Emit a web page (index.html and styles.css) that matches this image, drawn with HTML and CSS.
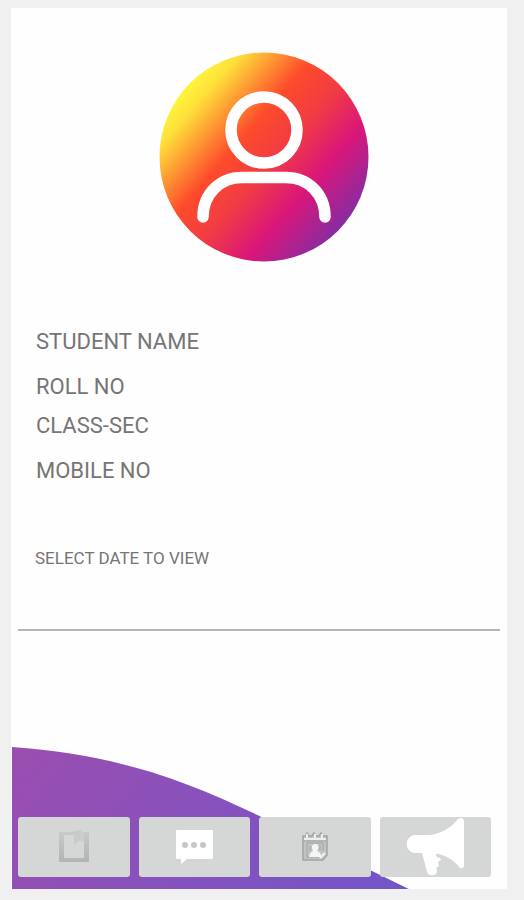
FILE: index.html
```
<!DOCTYPE html>
<html lang="en">
<head>
<meta charset="utf-8">
<meta name="viewport" content="width=device-width, initial-scale=1">
<title>Student profile</title>
<link rel="stylesheet" href="styles.css">
</head>
<body>
<main class="card">
  <svg class="avatar" viewBox="0 0 210 210" role="img" aria-label="Profile picture">
    <defs>
      <linearGradient id="sunset" gradientUnits="userSpaceOnUse" x1="28" y1="38" x2="182" y2="172">
        <stop offset="0" stop-color="#fff23c"/>
        <stop offset=".08" stop-color="#fee03a"/>
        <stop offset=".36" stop-color="#fd4b2b"/>
        <stop offset=".55" stop-color="#f13b44"/>
        <stop offset=".76" stop-color="#da1679"/>
        <stop offset="1" stop-color="#8b2ba0"/>
      </linearGradient>
    </defs>
    <circle cx="105" cy="105" r="104.500" fill="url(#sunset)"/>
    <g fill="none" stroke="#fff" stroke-width="11.500" stroke-linecap="round">
      <circle cx="105" cy="78" r="33"/>
      <path d="M44 165C44 142 61 125.500 83 125.500H127C149 125.500 166 142 166 165"/>
    </g>
  </svg>
  <section class="details">
    <p class="field">STUDENT NAME</p>
    <p class="field field-spaced">ROLL NO</p>
    <p class="field">CLASS-SEC</p>
    <p class="field field-spaced">MOBILE NO</p>
  </section>
  <p class="date-label">SELECT DATE TO VIEW</p>
  <hr class="divider">
  <div class="footer">
    <svg class="wave" viewBox="0 0 396 142" preserveAspectRatio="none" aria-hidden="true">
      <defs>
        <linearGradient id="violet" gradientUnits="userSpaceOnUse" x1="0" y1="0" x2="300" y2="240">
          <stop offset="0" stop-color="#9b4eb0"/>
          <stop offset="1" stop-color="#7355c8"/>
        </linearGradient>
      </defs>
      <path d="M0 0C104 7 174 34 247 69L396 142H0Z" fill="url(#violet)"/>
    </svg>
    <nav class="actions">
      <button class="action" type="button" aria-label="Homework">
        <svg class="icon" viewBox="0 0 60 60" aria-hidden="true">
          <defs>
            <linearGradient id="board" x1="0" y1="0" x2="0" y2="1">
              <stop offset="0" stop-color="#c8caca"/>
              <stop offset="1" stop-color="#b2b4b4"/>
            </linearGradient>
          </defs>
          <path fill="url(#board)" fill-rule="evenodd" d="M15 15H45V45H15ZM20 18V41H40V18Z"/>
          <path fill="#c8caca" d="M30 14L37 13V23L33 25L30 28Z"/>
          <path fill="#cbcccc" d="M36 15H40V25L36 23Z"/>
        </svg>
      </button>
      <button class="action" type="button" aria-label="Messages">
        <svg class="icon" viewBox="0 0 60 60" aria-hidden="true">
          <path fill="#fff" d="M13 13H48Q49 13 49 14V41Q49 42 48 42H23L17 47V42H13Q12 42 12 41V14Q12 13 13 13Z"/>
          <g fill="#c6c8c8"><circle cx="21" cy="28" r="3"/><circle cx="30" cy="28" r="3"/><circle cx="39" cy="28" r="3"/></g>
        </svg>
      </button>
      <button class="action" type="button" aria-label="Attendance">
        <svg class="icon" viewBox="0 0 60 60" aria-hidden="true">
          <path fill="#c2c4c4" stroke="#a2a4a4" stroke-width="1.500" d="M18 19H21L22 16L24 19H27L29 16L31 19H34L36 16L38 19H42V38L38 43H18Z"/>
          <path fill="none" stroke="#eee" stroke-width="2" d="M19 22H41M22 22V17M30 22V17M37 22V17"/>
          <path fill="none" stroke="#a2a4a4" d="M22 26H38V34M22 26V40H34M19 24H41"/>
          <path fill="#f5f5f5" d="M30 27C33 27 34 29 33 32L32 34C35 35 36 37 36 40H24C24 37 26 35 28 34C26 30 27 27 30 27Z"/>
          <path stroke="#f2f2f2" stroke-width="2" d="M35 41L40 36"/>
          <path stroke="#a2a4a4" d="M35 28V33M25 29V34"/>
        </svg>
      </button>
      <button class="action" type="button" aria-label="Announcements">
        <svg class="icon" viewBox="0 0 60 60" aria-hidden="true">
          <path fill="#fff" d="M10 18H24C36 17 46 11 53 2Q58 -1 59 4V48Q59 52 55 51C50 44 42 39 34 37C29 36 31 41 35 41L36 43L33 45L34 49L31 51C33 54 32 58 28 58Q24 59 22 55L17 36H10C-1 35 -1 19 10 18Z"/>
        </svg>
      </button>
    </nav>
  </div>
</main>
</body>
</html>
```
FILE: styles.css
```
* {
  box-sizing: border-box;
}

body {
  margin: 0;
  min-height: 100vh;
  padding: 8px 17px 11px 11px;
  display: flex;
  background: #f0f0f0;
  color: #757575;
  font-family: Roboto, "Liberation Sans", sans-serif;
}

.card {
  flex: 1;
  display: flex;
  flex-direction: column;
  padding-top: 44px;
  background: #fefefe;
  border-radius: 2px;
}

.avatar {
  width: 210px;
  height: 210px;
  margin-left: 10px;
  align-self: center;
}

.details {
  margin-top: 68px;
  padding: 0 25px;
}

.field {
  margin: 15px 0 0;
  font-size: 22px;
  line-height: 24px;
}

.field:first-child {
  margin-top: 0;
}

.field-spaced {
  margin-top: 21px;
}

.date-label {
  margin: 63px 24px 0;
  font-size: 17px;
  line-height: 24px;
}

.divider {
  height: 2px;
  margin: 59px 7px 0;
  border: 0;
  background: #b5b5b5;
}

.footer {
  position: relative;
  margin-top: auto;
  padding: 70px 16px 12px 7px;
}

.wave {
  position: absolute;
  left: 1px;
  bottom: 0;
  width: 80%;
  height: 100%;
}

.actions {
  position: relative;
  display: grid;
  grid-template-columns: repeat(4, 1fr);
  gap: 9px;
}

.action {
  height: 60px;
  padding: 0;
  display: flex;
  align-items: center;
  justify-content: center;
  border: 0;
  border-radius: 3px;
  background: #d5d7d6;
}

.icon {
  width: 60px;
  height: 60px;
}
```
